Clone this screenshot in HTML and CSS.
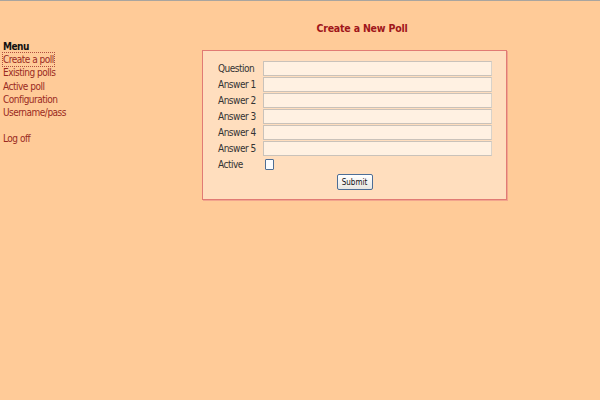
FILE: index.html
```html
<!DOCTYPE html>
<html lang="en">
<head>
  <meta charset="UTF-8">
  <title>Poll admin</title>
  <link rel="stylesheet" href="styles.css">
</head>
<body>

<div class="page">
  <!-- Menu -->
  <div class="menu">
    <div class="menu-title">Menu</div>
    <a href="#" class="menu-link current">Create a poll</a>
    <a href="#" class="menu-link">Existing polls</a>
    <a href="#" class="menu-link">Active poll</a>
    <a href="#" class="menu-link">Configuration</a>
    <a href="#" class="menu-link">Username/pass</a>
    <div class="menu-gap"></div>
    <a href="#" class="menu-link">Log off</a>
  </div>

  <!-- Inhalt -->
  <div class="content">
    <h1 class="title">Create a New Poll</h1>
    <form class="poll-box">
      <div class="poll-row"><label>Question</label><input type="text" class="field"></div>
      <div class="poll-row"><label>Answer 1</label><input type="text" class="field"></div>
      <div class="poll-row"><label>Answer 2</label><input type="text" class="field"></div>
      <div class="poll-row"><label>Answer 3</label><input type="text" class="field"></div>
      <div class="poll-row"><label>Answer 4</label><input type="text" class="field"></div>
      <div class="poll-row"><label>Answer 5</label><input type="text" class="field"></div>
      <div class="poll-row"><label>Active</label><span class="check"></span></div>
      <div class="submit-row"><button type="submit" class="submit-btn">Submit</button></div>
    </form>
  </div>
</div>

</body>
</html>
```

FILE: styles.css
```css
* {
  margin: 0;
  padding: 0;
  box-sizing: border-box;
}

body {
  font-family: 'DejaVu Sans Condensed', 'DejaVu Sans', sans-serif;
  font-size: 10px;
  letter-spacing: -0.5px;
  background: #ffcb98;
  color: #222;
  border-top: 1px solid #a9a59f;
  min-height: 100vh;
}

.page {
  display: flex;
}

.menu {
  width: 124px;
  padding: 39px 0 0 3px;
  display: flex;
  flex-direction: column;
  align-items: flex-start;
}

.menu-title {
  font-weight: bold;
  color: #111;
  line-height: 13px;
}

.menu-link {
  color: #9a2a1e;
  text-decoration: none;
  line-height: 13.3px;
}

.menu-link.current {
  outline: 1px dotted #b05040;
}

.menu-gap {
  height: 13px;
}

.content {
  flex: 1;
}

.title {
  text-align: center;
  font-size: 10.5px;
  font-weight: bold;
  letter-spacing: -0.2px;
  color: #a0161a;
  padding-top: 21px;
  line-height: 12px;
  height: 49px;
}

.poll-box {
  margin-left: 78px;
  width: 305px;
  height: 150px;
  background: #ffdebe;
  border: 1px solid #e17b74;
  box-shadow: 1px 1px 0 #f2a58e;
  padding: 9px 14px 0 15px;
}

.poll-row {
  display: flex;
  align-items: center;
  height: 16px;
}

.poll-row label {
  width: 45px;
  color: #333;
}

.field {
  width: 229px;
  height: 15px;
  background: #fff1e2;
  border: 1px solid #c9c2ba;
  border-right-color: #d8d2ca;
  font-size: 10px;
}

.check {
  width: 9px;
  height: 11px;
  margin: 1px 0 0 2px;
  border: 1px solid #4f6e94;
  border-radius: 1px;
  background: #fbfcfe;
}

.submit-row {
  display: flex;
  justify-content: center;
  padding-top: 2px;
  padding-right: 1px;
}

.submit-btn {
  font-family: 'DejaVu Sans Condensed', 'DejaVu Sans', sans-serif;
  font-size: 8px;
  letter-spacing: 0;
  color: #111;
  width: 36px;
  height: 16px;
  border: 1px solid #4d6e96;
  border-radius: 2px;
  background: linear-gradient(#ffffff, #e9e7e2);
}
```
